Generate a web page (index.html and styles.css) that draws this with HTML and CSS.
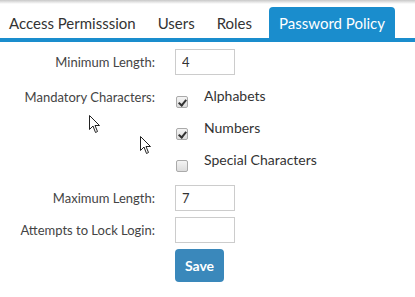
FILE: index.html
```html
<!DOCTYPE html>
<html lang="en">
<head>
    <meta charset="UTF-8">
    <title>Password Policy</title>
    <link rel="stylesheet" href="styles.css">
</head>
<body>
    <div class="topline"></div>

    <ul class="tabs">
        <li class="tab">Access Permisssion</li>
        <li class="tab">Users</li>
        <li class="tab">Roles</li>
        <li class="tab active">Password Policy</li>
    </ul>

    <form class="policy-form">
        <div class="form-row">
            <label for="min_len">Minimum Length:</label>
            <input type="text" id="min_len" value="4">
        </div>
        <div class="form-row checks-row">
            <label>Mandatory Characters:</label>
            <div class="checks">
                <div class="check"><span class="box checked"></span><span>Alphabets</span></div>
                <div class="check"><span class="box checked"></span><span>Numbers</span></div>
                <div class="check"><span class="box"></span><span>Special Characters</span></div>
            </div>
        </div>
        <div class="form-row">
            <label for="max_len">Maximum Length:</label>
            <input type="text" id="max_len" value="7">
        </div>
        <div class="form-row">
            <label for="attempts">Attempts to Lock Login:</label>
            <input type="text" id="attempts" value="">
        </div>
        <div class="form-row">
            <span></span>
            <button type="button" class="btn">Save</button>
        </div>
    </form>

    <!-- mouse pointers caught in the shot -->
    <svg class="cursor c1" width="12" height="19" viewBox="0 0 12 19"><path d="M0.5 0.5 L0.5 14.5 L4 11 L6.5 17.5 L8.5 16.5 L6 10.5 L10.5 10.5 Z" fill="#fff" stroke="#222" stroke-width="1"/></svg>
    <svg class="cursor c2" width="12" height="19" viewBox="0 0 12 19"><path d="M0.5 0.5 L0.5 14.5 L4 11 L6.5 17.5 L8.5 16.5 L6 10.5 L10.5 10.5 Z" fill="#fff" stroke="#222" stroke-width="1"/></svg>
</body>
</html>
```
FILE: styles.css
```css
* {
    margin: 0;
    padding: 0;
    box-sizing: border-box;
}

body {
    background: #fff;
    font-family: Lato, "Open Sans", sans-serif;
    color: #333;
    position: relative;
    width: 415px;
    height: 297px;
    overflow: hidden;
}

.topline {
    height: 4px;
    background: linear-gradient(#c8c8c8, #fff);
}

.tabs {
    list-style: none;
    display: flex;
    align-items: flex-end;
    height: 31px;
    margin-top: 3px;
    border-bottom: 4px solid #1a8dcd;
    box-sizing: content-box;
}

.tab {
    height: 31px;
    line-height: 32px;
    padding: 0 11px;
    font-size: 15px;
    color: #333;
}

.tab:first-child {
    padding-left: 9px;
}

.tab.active {
    background: #1a8dcd;
    color: #fff;
    border-radius: 4px 4px 0 0;
    padding: 0 10px;
    margin-left: 6px;
}

.policy-form {
    padding-top: 7px;
}

.form-row {
    display: grid;
    grid-template-columns: 155px 60px;
    column-gap: 20px;
    align-items: center;
    margin-bottom: 6px;
}

.form-row label {
    text-align: right;
    font-size: 13px;
    color: #444;
}

.form-row input {
    width: 60px;
    height: 26px;
    border: 1px solid #ccc;
    padding: 0 6px;
    font-size: 13px;
    font-family: Lato, sans-serif;
    color: #333;
}

.checks-row {
    align-items: start;
    grid-template-columns: 155px auto;
    margin-top: 12px;
    margin-bottom: 2px;
}

.checks-row label {
    padding-top: 2px;
}

.check {
    display: flex;
    align-items: flex-start;
    height: 32px;
    font-size: 14px;
    color: #333;
}

.box {
    width: 12px;
    height: 12px;
    margin: 9px 16px 0 1px;
    border: 1px solid #aaa;
    border-radius: 2px;
    background: linear-gradient(#f4f4f4, #dcdcdc);
    position: relative;
}

.box.checked::after {
    content: "";
    position: absolute;
    left: 3px;
    top: 1px;
    width: 3px;
    height: 6px;
    border: solid #333;
    border-width: 0 2px 2px 0;
    transform: rotate(40deg);
}

.btn {
    width: 49px;
    height: 33px;
    background: #3a88bb;
    color: #fff;
    border: none;
    border-radius: 4px;
    font-size: 14px;
    font-weight: bold;
    font-family: Lato, sans-serif;
}

.cursor {
    position: absolute;
}

.c1 {
    left: 89px;
    top: 115px;
}

.c2 {
    left: 140px;
    top: 136px;
}
```
